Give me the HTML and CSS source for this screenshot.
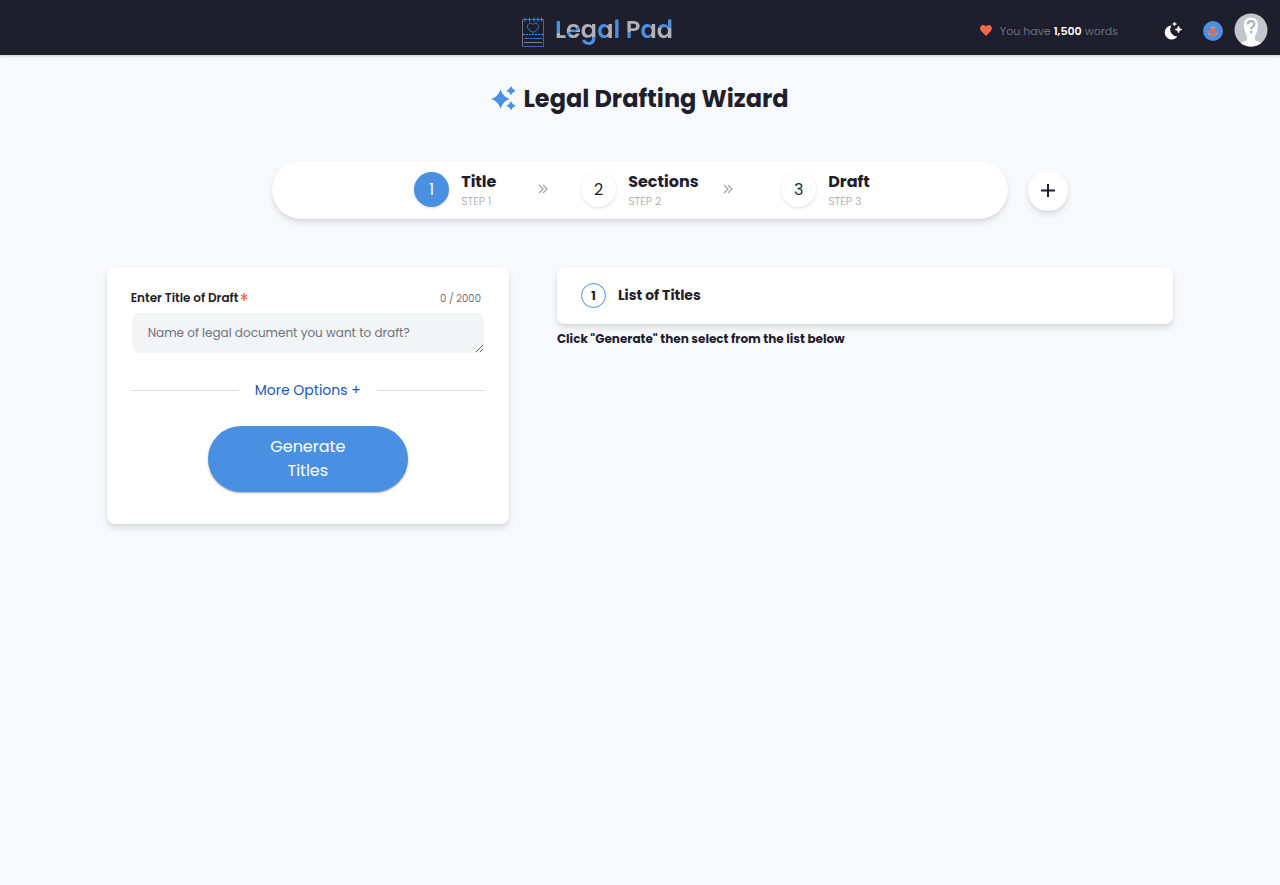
FILE: index.html
```html
<!DOCTYPE html>
<html lang="en">
<head>
<meta charset="utf-8">
<meta name="viewport" content="width=device-width, initial-scale=1">
<title>Legal Drafting Wizard</title>
<link rel="stylesheet" href="styles.css">
</head>
<body>
<header class="topbar">
  <a class="logo" href="#">
    <svg class="logo-mark" viewBox="0 0 24 32" fill="none" aria-hidden="true">
      <path d="M1.500 3v28" stroke="#6f7583"/>
      <path d="M1 3.500h22M22.500 3v28M1 30.500h22M3 22.500h18" stroke="#3468b8"/>
      <path d="M2 18.500h20" stroke="#4a90e2" stroke-dasharray="2 1"/>
      <path d="M3 26.500h18" stroke="#7b808c"/>
      <path d="M4 1.500v4M8.500 1.500v4M13 1.500v4M17 1.500v4M20.500 1.500v4" stroke="#4a90e2"/>
      <path d="M12 16.500C9 15 6.500 13 6.500 10.500c0-3.500 4-4.500 5.500-2 1.500-2.500 5.500-1.500 5.500 2 0 2.500-2.500 4.500-5.500 6z" stroke="#3f7bd0"/>
    </svg>
    <span class="logo-text"><span class="up">L</span><span class="mid">e</span><span class="tail">g</span><span class="side">a</span><span class="solid">l</span> <span class="foot">P</span><span class="side">a</span><span class="stem">d</span></span>
  </a>
  <div class="tools">
    <p class="credits">
      <svg class="heart" viewBox="0 0 24 22" fill="#f4694a" aria-hidden="true"><path d="M12 22 2.200 12.200C-3 6 3-2.500 9.500 1 11 1.800 12 3.400 12 3.400S13 1.800 14.500 1C21-2.500 27 6 21.800 12.200z"/></svg>
      <span>You have <b>1,500</b> words</span>
    </p>
    <button class="icon-button" type="button" aria-label="Dark mode">
      <svg viewBox="0 0 20 20" fill="#fff" aria-hidden="true"><path d="M8.500 4.500A7 7 0 1 0 14.500 15.500 7 7 0 0 1 8.500 4.500z"/><path d="m15.500 5 1 2.500 2.500 1-2.500 1-1 2.500-1-2.500-2.500-1 2.500-1zM11.500 1l.6 1.400 1.400.6-1.400.6-.6 1.400-.6-1.400L9.500 3l1.400-.6z" stroke="#fff" stroke-width=".6"/></svg>
    </button>
    <button class="icon-button support" type="button" aria-label="Support">
      <svg viewBox="0 0 20 20" fill="none" aria-hidden="true"><circle cx="10" cy="10" r="10" fill="#4a90e2"/><circle cx="10" cy="8.500" r="2.500" fill="#f4694a"/><path d="M8 6.500h4" stroke="#aeb3bc"/><path d="M5.500 9v2.500l3 1.500h3l3-1.500V9M7 14.500h6" stroke="#f4694a" stroke-width="1.300"/><path d="M5 12.800h2.500M12.500 12.800h2.500" stroke="#aeb3bc"/></svg>
    </button>
    <button class="icon-button avatar" type="button" aria-label="Account">
      <svg viewBox="0 0 34 34" aria-hidden="true"><defs><clipPath id="disc"><circle cx="17" cy="17" r="16.500"/></clipPath></defs><g clip-path="url(#disc)"><path fill="#c3c6cb" d="M0 0h34v34H0z"/><path fill="#fff" d="M17 4.500c-5 0-7.500 3.500-7 9 .3 4.500 1.800 7.500 3 9.500v4C12 28.500 8 28.500 6 31v3h22v-3c-2-2.500-6-2.500-7-4V23c1.200-2 2.700-5 3-9.500.5-5.500-2-9-7-9z"/></g><path d="M13.700 11.500c.2-4.600 6.800-4.300 6.800-.5 0 2.800-3.300 2.500-3.300 5.500" fill="none" stroke="#a9adb4" stroke-width="2"/><circle cx="17.200" cy="19" r="1.300" fill="#a9adb4"/></svg>
    </button>
  </div>
</header>

<main class="page">
  <h1 class="page-title">
    <svg viewBox="0 0 26 26" fill="#4a90e2" aria-hidden="true"><path d="M9.500 3.500Q12 11 19 13 12 15 9.500 22.500 7 15 0 13 7 11 9.500 3.500zM20 0q1.400 3.700 5 4.700-3.600 1-5 4.700-1.400-3.700-5-4.700 3.600-1 5-4.700zM20 15q1.400 3.700 5 4.700-3.600 1-5 4.700-1.400-3.700-5-4.700 3.600-1 5-4.700z"/></svg>
    Legal Drafting Wizard
  </h1>

  <div class="stepper-row">
    <ol class="stepper">
      <li class="step current"><span class="step-number">1</span><span class="step-text"><strong>Title</strong><small>STEP 1</small></span></li>
      <li class="arrow" aria-hidden="true"><svg viewBox="0 0 10 10"><path d="m1 1 4 4-4 4M5 1l4 4-4 4"/></svg></li>
      <li class="step"><span class="step-number">2</span><span class="step-text"><strong>Sections</strong><small>STEP 2</small></span></li>
      <li class="arrow" aria-hidden="true"><svg viewBox="0 0 10 10"><path d="m1 1 4 4-4 4M5 1l4 4-4 4"/></svg></li>
      <li class="step"><span class="step-number">3</span><span class="step-text"><strong>Draft</strong><small>STEP 3</small></span></li>
    </ol>
    <button class="add-button" type="button" aria-label="New draft"><svg viewBox="0 0 14 14" aria-hidden="true"><path d="M7 0v13M0 6.500h14"/></svg></button>
  </div>

  <div class="columns">
    <form class="card draft-form">
      <div class="field-head">
        <label for="draft-title">Enter Title of Draft<svg class="required" viewBox="0 0 8 8" aria-hidden="true"><path d="M4 0v8M1 2l6 4M1 6l6-4"/></svg></label>
        <span class="counter">0 / 2000</span>
      </div>
      <textarea id="draft-title" rows="1" maxlength="2000" placeholder="Name of legal document you want to draft?"></textarea>
      <div class="divider"><button class="more" type="button">More Options +</button></div>
      <button class="generate" type="button">Generate Titles</button>
    </form>

    <section class="results">
      <div class="card list-head"><span class="list-number">1</span><h2>List of Titles</h2></div>
      <p class="hint">Click "Generate" then select from the list below</p>
    </section>
  </div>
</main>
</body>
</html>
```
FILE: styles.css
```css
* { box-sizing: border-box; }
body {
  margin: 0;
  min-height: 100vh;
  background: #f8f9fd;
  color: #1e1e2d;
  font-family: Poppins, Inter, "Liberation Sans", sans-serif;
  font-size: 12px;
}
h1, h2, p, ol { margin: 0; padding: 0; }
button, textarea { font-family: inherit; border: 0; }
button { padding: 0; background: none; cursor: pointer; }
svg { display: block; flex: none; }

.topbar {
  display: grid;
  grid-template-columns: 1fr auto 1fr;
  align-items: center;
  height: 55px;
  padding: 0 12px;
  background: #1e1e2d;
  box-shadow: 0 1px 3px rgba(0, 0, 0, .2);
}
.logo {
  grid-column: 2;
  display: flex;
  align-items: center;
  gap: 10px;
  margin-right: 86px;
  padding-top: 9px;
  text-decoration: none;
}
.logo-mark { width: 24px; height: 32px; }
.logo-text {
  display: block;
  margin-top: -4px;
  font-size: 24px;
  line-height: 40px;
  font-weight: 600;
  white-space: pre;
}
.logo-text span {
  color: transparent;
  background-clip: text;
  -webkit-background-clip: text;
}
.logo-text .up { background-image: linear-gradient(#4a90e2 62%, #b0b2b8 62%); }
.logo-text .mid { background-image: linear-gradient(150deg, #b0b2b8 50%, #4a90e2 50%, #4a90e2 58%, #b0b2b8 58%); }
.logo-text .tail { background-image: linear-gradient(#b0b2b8 72%, #4a90e2 72%); }
.logo-text .side { background-image: linear-gradient(90deg, #4a90e2 62%, #b0b2b8 62%); }
.logo-text .solid { background-image: linear-gradient(#4a90e2, #4a90e2); }
.logo-text .foot { background-image: linear-gradient(#b0b2b8 58%, #4a90e2 58%); }
.logo-text .stem { background-image: linear-gradient(#4a90e2 44%, #b0b2b8 44%); }

.tools { display: flex; justify-content: flex-end; align-items: center; }
.credits {
  display: flex;
  align-items: center;
  gap: 8px;
  margin: 6px 45px 0 0;
  color: #6b7280;
  font-size: 11px;
  line-height: 16px;
  white-space: nowrap;
}
.credits b { color: #fff; font-weight: 600; }
.heart { width: 12px; height: 11px; }
.icon-button { width: 20px; height: 20px; margin: 6px 20px 0 0; }
.icon-button svg { width: 100%; height: 100%; }
.icon-button.support { margin-right: 11px; }
.icon-button.avatar { width: 34px; height: 34px; margin: 4px 0 0; }

.page { width: 83.33%; margin: 0 auto; padding: 28px 0; }
.page-title {
  display: flex;
  justify-content: center;
  align-items: center;
  gap: 6px;
  font-size: 24px;
  line-height: 32px;
  font-weight: 700;
  white-space: nowrap;
}
.page-title svg { width: 26px; height: 26px; }

.stepper-row {
  display: grid;
  grid-template-columns: 1fr minmax(0, 736px) 1fr;
  align-items: center;
  column-gap: 20px;
  margin: 46px 0 48px;
}
.stepper {
  grid-column: 2;
  display: flex;
  justify-content: center;
  align-items: center;
  height: 58px;
  padding: 0 0 2px 4px;
  border-radius: 29px;
  background: #fff;
  box-shadow: 0 4px 6px rgba(0, 0, 0, .1), 0 1px 2px rgba(0, 0, 0, .06);
  list-style: none;
}
.step { display: flex; align-items: center; gap: 12px; }
.step:first-child { width: 124px; }
.step:nth-child(3) { width: 142px; }
.step-number {
  display: grid;
  place-items: center;
  width: 35px;
  height: 35px;
  border-radius: 50%;
  background: #fff;
  box-shadow: 0 1px 3px rgba(0, 0, 0, .14);
  font-size: 16px;
}
.current .step-number { background: #4a90e2; color: #fff; }
.step-text { display: grid; }
.step-text strong { font-size: 16px; line-height: 24px; font-weight: 700; }
.step-text small { color: #a1a5b0; font-size: 11px; line-height: 14px; font-weight: 300; }
.arrow { width: 10px; }
.arrow:nth-child(2) { margin-right: 33px; }
.arrow:nth-child(4) { margin-right: 48px; }
.arrow svg { width: 10px; height: 10px; }
.arrow path { fill: none; stroke: #a9adb4; stroke-width: 1.5; }
.add-button {
  display: grid;
  place-items: center;
  width: 40px;
  height: 40px;
  margin-top: 2px;
  border-radius: 50%;
  background: #fff;
  box-shadow: 0 4px 6px rgba(0, 0, 0, .1), 0 1px 2px rgba(0, 0, 0, .06);
}
.add-button svg { width: 14px; height: 14px; }
.add-button path { fill: none; stroke: #1e1e2d; stroke-width: 2; }

.columns { display: grid; grid-template-columns: 402fr 616fr; gap: 48px; align-items: start; }
.card {
  border-radius: 8px;
  background: #fff;
  box-shadow: 0 4px 6px rgba(0, 0, 0, .1), 0 1px 3px rgba(0, 0, 0, .06);
}
.draft-form { display: flex; flex-direction: column; padding: 22px 24px 32px; }
.field-head { display: flex; justify-content: space-between; align-items: center; padding-right: 4px; line-height: 18px; }
.field-head label { display: flex; align-items: center; gap: 2px; font-weight: 600; }
.required { width: 8px; height: 8px; margin-bottom: 2px; }
.required path { stroke: #f4694a; stroke-width: 1.5; }
.counter { color: #6b7280; font-size: 10px; line-height: 16px; padding-top: 2px; }
textarea {
  height: 40px;
  margin: 6px 1px 0;
  padding: 10px 16px;
  border-radius: 8px;
  background: #f3f4f6;
  color: #1e1e2d;
  font-size: 12px;
  line-height: 20px;
  resize: vertical;
}
textarea::placeholder { color: #6b7280; }
.divider { display: flex; align-items: center; gap: 16px; margin: 25px 0 24px; }
.divider::before, .divider::after { content: ""; flex: 1; height: 1px; background: #dcdee2; }
.more { color: #1a56bd; font-size: 14px; line-height: 24px; }
.generate {
  align-self: center;
  width: 200px;
  padding: 9px 48px;
  border-radius: 33px;
  background: #4a90e2;
  box-shadow: 0 1px 2px rgba(0, 0, 0, .35);
  color: #fff;
  font-size: 16px;
  line-height: 24px;
}
.list-head { display: flex; align-items: center; gap: 12px; padding: 16px 24px; }
.list-number {
  display: grid;
  place-items: center;
  width: 25px;
  height: 25px;
  border: 1px solid #4a90e2;
  border-radius: 50%;
  font-weight: 700;
}
.list-head h2 { font-size: 14px; line-height: 25px; font-weight: 700; }
.hint { margin-top: 6px; line-height: 18px; font-weight: 700; }
```
